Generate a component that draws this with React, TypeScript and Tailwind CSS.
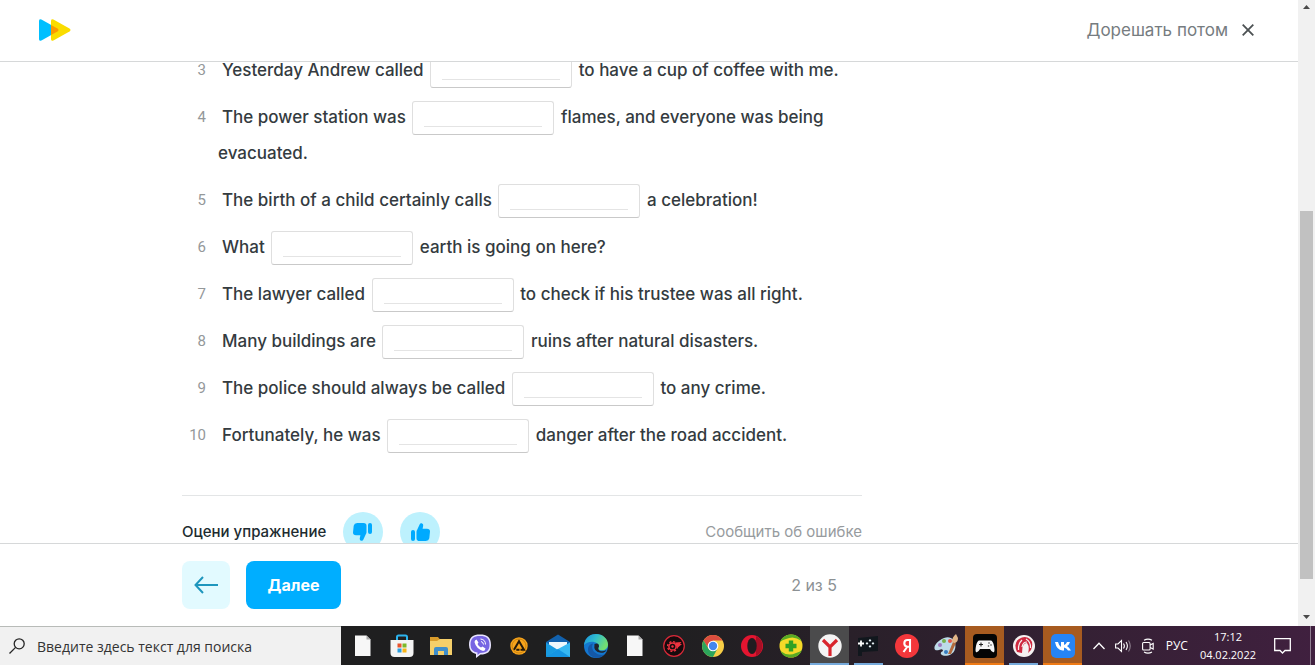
import type { ReactNode } from "react";

type Exercise = { n: number; before: string; after: string };

const exercises: Exercise[] = [
  { n: 3, before: "Yesterday Andrew called", after: "to have a cup of coffee with me." },
  { n: 4, before: "The power station was", after: "flames, and everyone was being evacuated." },
  { n: 5, before: "The birth of a child certainly calls", after: "a celebration!" },
  { n: 6, before: "What", after: "earth is going on here?" },
  { n: 7, before: "The lawyer called", after: "to check if his trustee was all right." },
  { n: 8, before: "Many buildings are", after: "ruins after natural disasters." },
  { n: 9, before: "The police should always be called", after: "to any crime." },
  { n: 10, before: "Fortunately, he was", after: "danger after the road accident." },
];

function Logo() {
  return (
    <svg viewBox="0 0 32 22" className="h-[22px] w-8" aria-hidden="true">
      <path d="M0 2Q0-.6 2.400.6L18.500 9.500Q20.500 11 18.500 12.500L2.400 21.400Q0 22.600 0 20Z" fill="#00bfff" />
      <path d="M12 2Q12-.6 14.400.6L30.500 9.500Q32.500 11 30.500 12.500L14.400 21.400Q12 22.600 12 20Z" fill="#fadc00" />
      <path d="M12 6L18.500 9.500Q20.500 11 18.500 12.500L12 16Z" fill="#fb9a00" />
    </svg>
  );
}

function Header() {
  return (
    <header className="flex h-[62px] shrink-0 items-center justify-between border-b border-[#d6d8d9] bg-white pr-11 pb-px pl-[39px]">
      <a href="#home" aria-label="Главная">
        <Logo />
      </a>
      <button type="button" className="flex items-center gap-[14px] text-[17px] leading-6 text-[#767c80]">
        Дорешать потом
        <svg viewBox="0 0 12 12" className="size-3" fill="none" stroke="#4c5153" strokeWidth="1.8" aria-hidden="true">
          <path d="M.7.7l10.600 10.600M11.300.7L.7 11.300" />
        </svg>
      </button>
    </header>
  );
}

function Blank({ n }: { n: number }) {
  return (
    <span className="mx-[2px] -my-px inline-block h-[34px] w-[142px] rounded-[3px] border border-[#dfdfdf] border-b-[#c9c9c9] bg-white px-[11px] align-middle">
      <input
        type="text"
        aria-label={`Пропуск ${n}`}
        className="block h-[25px] w-full border-b border-[#e4e4e4] bg-transparent text-center text-base outline-none"
      />
    </span>
  );
}

function ThumbUp() {
  return (
    <svg viewBox="0 0 20 20" className="size-5" fill="#00aaff" aria-hidden="true">
      <rect x="1" y="8" width="4" height="11" rx="2" />
      <path d="M6.500 9.800Q6.500 8.700 7.200 7.800L9.600 2.600Q10.200.8 11.800 1.200Q13.600 1.700 13.200 3.800L12.600 6.700H17Q20 6.700 20 9.500L19.300 16.200Q18.800 18.800 15.800 19H9.500Q6.500 19 6.500 16.200Z" />
    </svg>
  );
}

function Rate() {
  return (
    <section className="mt-[42px] flex items-center justify-between border-t border-[#e3e5e6] pt-4 text-[15px] leading-5">
      <div className="flex items-center gap-[17px] text-[#202b30]">
        <span className="font-medium">Оцени упражнение</span>
        <button type="button" aria-label="Не нравится" className="flex size-10 items-center justify-center rounded-full bg-[#bdf1fd]">
          <span className="rotate-180">
            <ThumbUp />
          </span>
        </button>
        <button type="button" aria-label="Нравится" className="flex size-10 items-center justify-center rounded-full bg-[#bdf1fd]">
          <ThumbUp />
        </button>
      </div>
      <a href="#report" className="text-[#979b9e]">Сообщить об ошибке</a>
    </section>
  );
}

function Footer() {
  return (
    <footer className="h-[83px] shrink-0 border-t border-[#d6d8d9] bg-white pt-[17px] pl-[182px]">
      <div className="flex max-w-[680px] items-center gap-4 pr-[25px]">
        <button type="button" aria-label="Назад" className="flex size-12 items-center justify-center rounded-lg bg-[#e2faff]">
          <svg viewBox="0 0 24 18" className="h-[18px] w-6" fill="none" stroke="#1e96bd" strokeWidth="2" aria-hidden="true">
            <path d="M24 9H1.500M9 1L1.500 9L9 17" />
          </svg>
        </button>
        <button type="button" className="h-12 w-[95px] rounded-lg bg-[#00aeff] text-[16px] font-bold text-white">
          Далее
        </button>
        <span className="ml-auto text-[16px] text-[#8c9194]">2 из 5</span>
      </div>
    </footer>
  );
}

function Scrollbar() {
  return (
    <div className="flex w-[17px] shrink-0 flex-col items-center bg-[#f1f1f1]" aria-hidden="true">
      <svg viewBox="0 0 17 17" className="size-[17px] shrink-0" fill="#4a4a4a"><path d="M5 9L8.500 5L12 9Z" /></svg>
      <div className="flex-[194]" />
      <div className="w-[13px] flex-[368] bg-[#c1c1c1]" />
      <div className="flex-[30]" />
      <svg viewBox="0 0 17 17" className="size-[17px] shrink-0" fill="#4a4a4a"><path d="M5 6L8.500 10L12 6Z" /></svg>
    </div>
  );
}

function Glyph({ children }: { children: ReactNode }) {
  return (
    <svg viewBox="0 0 24 24" className="size-6" aria-hidden="true">
      {children}
    </svg>
  );
}

const page = (
  <Glyph>
    <path d="M4 1.500H15.500L19.500 5.500V22H4Z" fill="#f7f7f7" />
    <path d="M15.500 1.500V5.500H19.500Z" fill="#a8a8a8" />
  </Glyph>
);

const apps: { name: string; icon: ReactNode; cell?: string }[] = [
  { name: "Документ", icon: page },
  {
    name: "Microsoft Store",
    icon: (
      <Glyph>
        <path d="M7 7V3Q7 1.500 8.500 1.500H15.500Q17 1.500 17 3V7" fill="none" stroke="#2cb4ee" strokeWidth="2" />
        <path d="M.5 6H23.500V19Q23.500 23 19.500 23H4.500Q.5 23 .5 19Z" fill="#f4f4f4" />
        <path d="M7.500 9.500h4v4h-4z" fill="#e8532c" />
        <path d="M12.500 9.500h4v4h-4z" fill="#7db928" />
        <path d="M7.500 14.500h4v4h-4z" fill="#2a9fe0" />
        <path d="M12.500 14.500h4v4h-4z" fill="#f9b517" />
      </Glyph>
    ),
  },
  {
    name: "Проводник",
    icon: (
      <Glyph>
        <path d="M1 3H9L11 5.500H22V10H1Z" fill="#d99c2b" />
        <path d="M1 7H8L11 5H23V21H1Z" fill="#f5cf6a" />
        <path d="M5 21V15Q5 13 7 13H17Q19 13 19 15V21H15V17H9V21Z" fill="#3f8ecb" />
      </Glyph>
    ),
  },
  {
    name: "Viber",
    icon: (
      <Glyph>
        <path d="M12 .5C19 .5 23 3 23 11C23 18 19 20.500 12.500 20.500L8 24V20Q1 18 1 11C1 3 5 .5 12 .5Z" fill="#e9e5ff" />
        <path d="M12 2C18.500 2 21.500 4.500 21.500 10.800C21.500 17 18 19 12 19L9.500 21V18.600Q2.500 17.500 2.500 10.800C2.500 4.500 5.500 2 12 2Z" fill="#7765e3" />
        <path d="M7 6.500L8.500 5.500L10.500 8.500L9.500 10Q10.500 12.500 13 13.500L14.500 12.500L17.500 14.500Q17 17 15 17Q8 14.500 6.500 8Z" fill="#fff" />
        <path d="M12.500 5Q17.500 5.500 17.500 10.500M13 7.500Q15.300 8 15.500 10.500" fill="none" stroke="#fff" strokeWidth="1" />
      </Glyph>
    ),
  },
  {
    name: "AIMP",
    icon: (
      <Glyph>
        <circle cx="12" cy="12" r="8.700" fill="#f9a51b" />
        <circle cx="12" cy="12" r="7" fill="none" stroke="#ad6e0a" strokeWidth=".6" />
        <path d="M7 15.800L12 7.200L17 15.800H13.500M9.300 15.800H12.500" fill="none" stroke="#251a0c" strokeWidth="2" />
      </Glyph>
    ),
  },
  {
    name: "Почта",
    icon: (
      <Glyph>
        <path d="M0 8L12 .5L24 8V12H0Z" fill="#1261ad" />
        <path d="M3 8H21V17H3Z" fill="#eef8fd" />
        <path d="M0 8.500L12 16L0 23Z" fill="#199be1" />
        <path d="M24 8.500V23H0L12 15Z" fill="#36b8f2" />
        <path d="M0 23L12 15L24 23Z" fill="#1595e2" />
      </Glyph>
    ),
  },
  {
    name: "Microsoft Edge",
    icon: (
      <Glyph>
        <defs>
          <linearGradient id="edge-top" x1="0" y1="0" x2="1" y2=".4">
            <stop offset="0" stopColor="#1991dc" />
            <stop offset=".5" stopColor="#30bdcf" />
            <stop offset="1" stopColor="#72de72" />
          </linearGradient>
        </defs>
        <circle cx="12" cy="12" r="12" fill="#1477cf" />
        <path d="M0 11C1 3 7 0 12 0C19 0 24 5 24 10.500C24 15 20 17 16 16C13.500 15.500 14.500 14 15 12.500C15 8 6 5 0 11Z" fill="url(#edge-top)" />
        <path d="M9 9.500C6 15 11 22 20 20.800C14 27 4 23 4 16C4 12 6 10 9 9.500Z" fill="#1558a7" />
        <path d="M10.500 10Q15 8 15 12.500Q13 15 16 17Q19 18 22.500 16Q21 19 17 18.800Q9 18 10.500 10Z" fill="#20242b" />
      </Glyph>
    ),
  },
  { name: "Текстовый файл", icon: page },
  {
    name: "Центр игр",
    icon: (
      <Glyph>
        <circle cx="12" cy="12" r="10.300" fill="#160b0d" stroke="#d82938" strokeWidth="1.200" />
        <circle cx="10.500" cy="12.500" r="3.600" fill="none" stroke="#ef3340" strokeWidth="1.500" />
        <circle cx="10.500" cy="12.500" r="4.900" fill="none" stroke="#ef3340" strokeWidth="1.400" strokeDasharray="2 1.850" />
        <path d="M13 8.500L19.500 8L18 10H20L16 13.500L14 12" fill="#ef3340" />
        <circle cx="10.500" cy="12.500" r="1.200" fill="#ef3340" />
      </Glyph>
    ),
  },
  {
    name: "Google Chrome",
    icon: (
      <Glyph>
        <circle cx="12" cy="12" r="11" fill="#f8ce46" />
        <path d="M2.500 6.500A11 11 0 0 1 21.500 6.500H12L7.500 14.500Z" fill="#db4d3f" />
        <path d="M2.500 6.500A11 11 0 0 0 12 23L16.500 14.500H7.500Z" fill="#2ca55b" />
        <circle cx="12" cy="12" r="5.300" fill="#fff" />
        <circle cx="12" cy="12" r="4.200" fill="#4387ee" />
      </Glyph>
    ),
  },
  {
    name: "Opera",
    icon: (
      <Glyph>
        <circle cx="12" cy="12" r="11" fill="#e41530" />
        <path d="M16 2A11 11 0 0 1 16 22Z" fill="#a70f25" />
        <ellipse cx="12" cy="12" rx="4.700" ry="8" fill="#211c20" />
      </Glyph>
    ),
  },
  {
    name: "360 Total Security",
    icon: (
      <Glyph>
        <circle cx="12" cy="12" r="11.500" fill="#f5d928" />
        <path d="M1 8Q4 0 13 .5Q20 1 22.500 7Q15 1 7 5Q3 6 1 8ZM23 16Q20 24 11 23.500Q4 23 1.500 17Q9 23 17 19Q21 18 23 16Z" fill="#58aa25" />
        <path d="M9.800 6.500h4.400v3.300h3.300v4.400h-3.300v3.300H9.800v-3.300H6.500V9.800h3.300Z" fill="#30a124" />
      </Glyph>
    ),
  },
  {
    name: "Яндекс Браузер",
    cell: "bg-[#4b4b4c] border-b-2 border-[#76aadb]",
    icon: (
      <Glyph>
        <circle cx="12" cy="12" r="11.700" fill="#f4f4f4" />
        <path d="M5 6L12 13L19 6M12 12V22" fill="none" stroke="#d9252d" strokeWidth="3.200" />
      </Glyph>
    ),
  },
  {
    name: "Игровой режим",
    cell: "mx-[5px] border-b-2 border-[#76aadb]",
    icon: (
      <Glyph>
        <path d="M2 4L22 2V17L6 18V22H2Z" fill="#11171d" />
        <path d="M2 9.500H8M5 6.500V12.500" stroke="#fff" strokeWidth="1.800" />
        <path d="M14 5l1.400 1.400-1.400 1.400-1.400-1.400ZM14 11l1.400 1.400-1.400 1.400-1.400-1.400ZM11 8l1.400 1.400-1.400 1.400-1.400-1.400ZM17 8l1.400 1.400-1.400 1.400-1.400-1.400Z" fill="#e5f0f4" />
      </Glyph>
    ),
  },
  {
    name: "Яндекс",
    icon: (
      <Glyph>
        <circle cx="12" cy="12" r="12" fill="#f3373b" />
        <path d="M15 18V6H12.500Q9.300 6 9.300 9.200T12.500 12.700H15M12.500 12.500L8.500 18" fill="none" stroke="#fff" strokeWidth="2.100" />
      </Glyph>
    ),
  },
  {
    name: "Paint",
    icon: (
      <Glyph>
        <path d="M10 4C18 1 23 8 21 15C19 23 8 23 7 20Q6 18 9 17Q9 14 5 16C-3 18 0 8 10 4Z" fill="#bddbe9" />
        <circle cx="6" cy="11" r="2" fill="#9e79bd" />
        <circle cx="10" cy="7" r="2" fill="#76b34e" />
        <circle cx="16" cy="7" r="2" fill="#e65847" />
        <circle cx="12" cy="18" r="2" fill="#367bc0" />
        <path d="M14 20L19 8L22 9L17 20Z" fill="#b36b3d" />
        <path d="M18 8Q18 3 22 0L24 4Q24 8 21 9Z" fill="#e2b688" />
      </Glyph>
    ),
  },
  {
    name: "Игры",
    cell: "bg-[#a75b20] border-b-2 border-[#ef7b16]",
    icon: (
      <Glyph>
        <rect width="24" height="24" rx="4" fill="#050505" />
        <path d="M6 6.500H18Q20 7 21 12Q22 17 21 18Q19 19 17 15H7Q5 19 3 18Q2 17 3 12Q4 7 6 6.500Z" fill="#f5f5f5" />
        <path d="M6 10.500H10M8 8.500V12.500" stroke="#222" strokeWidth="1.100" />
        <circle cx="16" cy="9" r=".8" fill="#444" />
        <circle cx="18" cy="11" r=".8" fill="#444" />
        <circle cx="15.500" cy="12" r=".8" fill="#444" />
      </Glyph>
    ),
  },
  {
    name: "Garena",
    cell: "mx-[5px] border-b-2 border-[#76aadb]",
    icon: (
      <Glyph>
        <circle cx="12" cy="12" r="11" fill="#f5f1f1" />
        <path d="M5 18Q1 9 7 5Q13 1 18 5Q22 9 19 16L16 19Q18 13 15 9Q12 9 10.500 13L10 19Z" fill="#cf2940" />
        <path d="M6.500 16Q6 10 10 6M10 13Q11 8 15 8M14 5Q19 8 18.500 14" fill="none" stroke="#f5f1f1" strokeWidth="1.200" />
      </Glyph>
    ),
  },
  {
    name: "ВКонтакте",
    cell: "bg-[#a75b20] border-b-2 border-[#ef7b16]",
    icon: (
      <Glyph>
        <rect width="24" height="24" rx="5" fill="#2684f5" />
        <path d="M4 8H7Q8 12 10 13V8H13V11Q15 10.500 16 8H19Q18 11 16 12Q18 13 20 16.500H17Q15.500 14 13 13.500V16.500H11.500Q5.500 16 4 8Z" fill="#fff" />
      </Glyph>
    ),
  },
];

function Taskbar() {
  return (
    <div className="flex h-[39px] shrink-0 bg-linear-to-r from-[#1f1f20] from-50% to-[#40203f] font-['Open_Sans','Noto_Sans',sans-serif] text-white">
      <label className="flex w-[341px] shrink-0 items-center gap-3 border-t border-[#b8bbb8] bg-[#f1f1f1] pl-[9px] text-black">
        <svg viewBox="0 0 16 16" className="size-4 shrink-0" fill="none" stroke="#262626" strokeWidth="1.300" aria-hidden="true">
          <circle cx="10.200" cy="5.800" r="5" />
          <path d="M6.600 9.400L.5 15.500" />
        </svg>
        <input
          type="text"
          aria-label="Поиск"
          placeholder="Введите здесь текст для поиска"
          className="min-w-0 flex-1 bg-transparent text-[14px] outline-none placeholder:text-[#333333]"
        />
      </label>
      <nav aria-label="Приложения" className="ml-[3px] grid w-[738px] shrink-0 grid-cols-19">
        {apps.map((app) => (
          <button key={app.name} type="button" aria-label={app.name} className="relative flex items-center justify-center">
            <span className={`absolute inset-0 ${app.cell ?? ""}`} />
            <span className="relative">{app.icon}</span>
          </button>
        ))}
      </nav>
      <div className="mr-1 flex flex-1 items-center justify-end border-r border-[#8f7d90] pr-[19px]">
        <svg viewBox="0 0 12 8" className="h-2 w-3 shrink-0" fill="none" stroke="#fff" strokeWidth="1.300" aria-hidden="true">
          <path d="M.5 7L6 1.200L11.500 7" />
        </svg>
        <svg viewBox="0 0 17 14" className="ml-[10px] h-[14px] w-[17px] shrink-0" fill="none" stroke="#fff" strokeWidth="1.100" aria-hidden="true">
          <path d="M.6 5H3L6.500 1.500V12.500L3 9H.6ZM8.500 4.500Q10.300 7 8.500 9.500M11 3Q13.800 7 11 11" />
          <path d="M13.500 1.500Q17 7 13.500 12.500" stroke="#8f8090" />
        </svg>
        <svg viewBox="0 0 12 16" className="ml-[10px] h-4 w-3 shrink-0" fill="none" stroke="#fff" strokeWidth="1.100" aria-hidden="true">
          <rect x=".6" y="4.500" width="7.500" height="7.500" rx="1" />
          <path d="M8.100 7L11.200 5.500V11L8.100 9.500M2 2.200Q6 0 10 2.200M2 14Q6 16.200 10 14" />
        </svg>
        <span className="ml-3 text-[12px]">РУС</span>
        <time dateTime="2022-02-04T17:12" className="ml-3 text-center text-[11px] leading-[18px] whitespace-nowrap">
          17:12
          <br />
          04.02.2022
        </time>
        <svg viewBox="0 0 17 16" className="ml-[18px] h-4 w-[17px] shrink-0" fill="none" stroke="#fff" strokeWidth="1.300" aria-hidden="true">
          <path d="M.7.7H16.300V12.500H11L8.500 15L6 12.500H.7Z" />
        </svg>
      </div>
    </div>
  );
}

export default function App() {
  return (
    <div className="flex h-screen flex-col overflow-hidden bg-white font-['Inter','Roboto',sans-serif]">
      <div className="flex min-h-0 flex-1">
        <div className="flex min-w-0 flex-1 flex-col">
          <Header />
          <main className="min-h-0 flex-1 overflow-hidden pl-[182px]">
            <div className="-mt-[10px] max-w-[680px]">
              <ol className="flex flex-col gap-[11px] text-[17px] leading-9 text-[#343b40]">
                {exercises.map((item) => (
                  <li key={item.n} className="flex gap-3">
                    <span className="w-6 shrink-0 text-right font-['Roboto',sans-serif] text-[15px] text-[#94989a]">
                      {item.n}
                    </span>
                    <p className="flex-1 indent-1 font-medium">
                      {item.before} <Blank n={item.n} /> {item.after}
                    </p>
                  </li>
                ))}
              </ol>
              <Rate />
            </div>
          </main>
          <Footer />
        </div>
        <Scrollbar />
      </div>
      <Taskbar />
    </div>
  );
}
